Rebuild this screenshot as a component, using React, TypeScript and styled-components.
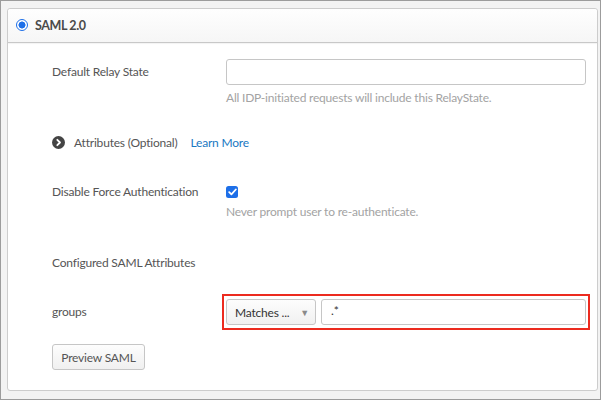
import styled, { createGlobalStyle } from 'styled-components'

const GlobalStyle = createGlobalStyle`
  body {
    margin: 0;
    font-family: Lato, "Open Sans", "Liberation Sans", sans-serif;
    background: #fff;
  }
`

export default function App() {
  return (
    <>
      <GlobalStyle />
      <Frame>
        <Card>
          <Header>
            <Radio />
            <HeaderTitle>SAML 2.0</HeaderTitle>
          </Header>
          <Body>
            <FormRow>
              <Label>Default Relay State</Label>
              <Field>
                <TextInput />
                <Help>All IDP-initiated requests will include this RelayState.</Help>
              </Field>
            </FormRow>

            <ExpandRow $top={26}>
              <ChevronCircle>
                <svg width="13" height="13" viewBox="0 0 13 13">
                  <circle cx="6.5" cy="6.5" r="6.5" fill="#444" />
                  <path d="M5.3 3.8 L8 6.5 L5.3 9.2" stroke="#fff" strokeWidth="1.8" fill="none" strokeLinecap="round" strokeLinejoin="round" />
                </svg>
              </ChevronCircle>
              <ExpandLabel>Attributes (Optional)</ExpandLabel>
              <LearnMore href="#">Learn More</LearnMore>
            </ExpandRow>

            <FormRow $top={30}>
              <Label $lh={20}>Disable Force Authentication</Label>
              <Field>
                <CheckRow>
                  <Checkbox>
                    <svg width="9" height="8" viewBox="0 0 9 8">
                      <path d="M1.2 4.2 L3.4 6.3 L7.8 1.5" stroke="#fff" strokeWidth="1.8" fill="none" strokeLinecap="round" strokeLinejoin="round" />
                    </svg>
                  </Checkbox>
                </CheckRow>
                <Help $top={2}>Never prompt user to re-authenticate.</Help>
              </Field>
            </FormRow>

            <SectionLabel>Configured SAML Attributes</SectionLabel>

            <AttrRow>
              <Label>groups</Label>
              <Highlight>
                <Select>
                  <span>Matches ...</span>
                  <Caret>▼</Caret>
                </Select>
                <ValueInput>.*</ValueInput>
              </Highlight>
            </AttrRow>

            <Button>Preview SAML</Button>
          </Body>
        </Card>
      </Frame>
    </>
  )
}

const Frame = styled.div`
  box-sizing: border-box;
  width: 601px;
  height: 400px;
  border: 1px solid #9c9c9c;
  background: #f3f3f3;
  padding: 7px 2px 8px 6px;
`

const Card = styled.div`
  box-sizing: border-box;
  height: 100%;
  border: 1px solid #cdcdcd;
  border-radius: 3px;
  background: #fff;
  display: flex;
  flex-direction: column;
`

const Header = styled.div`
  height: 33px;
  display: flex;
  align-items: center;
  gap: 7px;
  padding-left: 8px;
  background: linear-gradient(#fefefe, #f6f6f6);
  border-bottom: 1px solid #c8c8c8;
  border-radius: 3px 3px 0 0;
  box-shadow: 0 1px 1px rgba(0, 0, 0, 0.05);
`

const Radio = styled.span`
  box-sizing: border-box;
  width: 12px;
  height: 12px;
  border-radius: 50%;
  border: 1.5px solid #1d6fe8;
  background: radial-gradient(circle, #1d6fe8 0 3.2px, #fff 3.8px);
  margin-top: -2px;
`

const HeaderTitle = styled.span`
  font-size: 12.5px;
  font-weight: 700;
  letter-spacing: -0.4px;
  color: #4a4a4a;
  margin-top: -1px;
`

const Body = styled.div`
  padding: 16px 11px 0 44px;
  display: flex;
  flex-direction: column;
`

const FormRow = styled.div<{ $top?: number }>`
  display: grid;
  grid-template-columns: 174px 1fr;
  margin-top: ${p => p.$top ?? 0}px;
`

const Label = styled.div<{ $lh?: number }>`
  font-size: 12px;
  letter-spacing: -0.2px;
  color: #555;
  line-height: ${p => p.$lh ?? 26}px;
`

const Field = styled.div`
  display: flex;
  flex-direction: column;
`

const TextInput = styled.div`
  box-sizing: border-box;
  height: 26px;
  border: 1px solid #c6c6c6;
  border-radius: 3px;
  background: #fff;
`

const Help = styled.div<{ $top?: number }>`
  margin-top: ${p => p.$top ?? 5}px;
  font-size: 12px;
  letter-spacing: -0.2px;
  line-height: 16px;
  color: #a3a3a3;
`

const ExpandRow = styled.div<{ $top: number }>`
  display: flex;
  align-items: center;
  height: 20px;
  margin-top: ${p => p.$top}px;
`

const ChevronCircle = styled.span`
  display: flex;
  margin-right: 9px;
`

const ExpandLabel = styled.span`
  font-size: 12px;
  letter-spacing: -0.2px;
  color: #555;
  margin-right: 13px;
`

const LearnMore = styled.a`
  font-size: 12px;
  letter-spacing: -0.2px;
  color: #1a78c2;
  text-decoration: none;
`

const CheckRow = styled.div`
  height: 20px;
  display: flex;
  align-items: center;
`

const Checkbox = styled.span`
  width: 12px;
  height: 12px;
  border-radius: 2.5px;
  background: #1d6fe8;
  display: flex;
  align-items: center;
  justify-content: center;
`

const SectionLabel = styled.div`
  margin-top: 33px;
  font-size: 12px;
  letter-spacing: -0.2px;
  color: #555;
  line-height: 20px;
`

const AttrRow = styled.div`
  display: grid;
  grid-template-columns: 170px 1fr;
  align-items: center;
  margin-top: 21px;
  margin-right: -4px;
`

const Highlight = styled.div`
  display: flex;
  gap: 5px;
  padding: 3px 2px;
  border: 2px solid #ec2b1f;
`

const Select = styled.div`
  box-sizing: border-box;
  width: 90px;
  height: 26px;
  display: flex;
  align-items: center;
  justify-content: space-between;
  padding: 0 6px 0 8px;
  border: 1px solid #c6c6c6;
  border-radius: 3px;
  background: linear-gradient(#fdfdfd, #f1f1f1);
  font-size: 12px;
  letter-spacing: -0.2px;
  color: #333;
`

const Caret = styled.span`
  font-size: 9px;
  color: #8a8a8a;
`

const ValueInput = styled.div`
  box-sizing: border-box;
  flex: 1;
  height: 26px;
  border: 1px solid #c6c6c6;
  border-radius: 3px;
  padding: 0 9px;
  font-size: 12px;
  line-height: 22px;
  color: #333;
`

const Button = styled.button`
  align-self: flex-start;
  margin-top: 14px;
  height: 26px;
  width: 93px;
  padding: 0;
  border: 1px solid #c6c6c6;
  border-radius: 3px;
  background: linear-gradient(#fdfdfd, #f0f0f0);
  font-family: inherit;
  font-size: 12px;
  letter-spacing: -0.2px;
  color: #555;
`
